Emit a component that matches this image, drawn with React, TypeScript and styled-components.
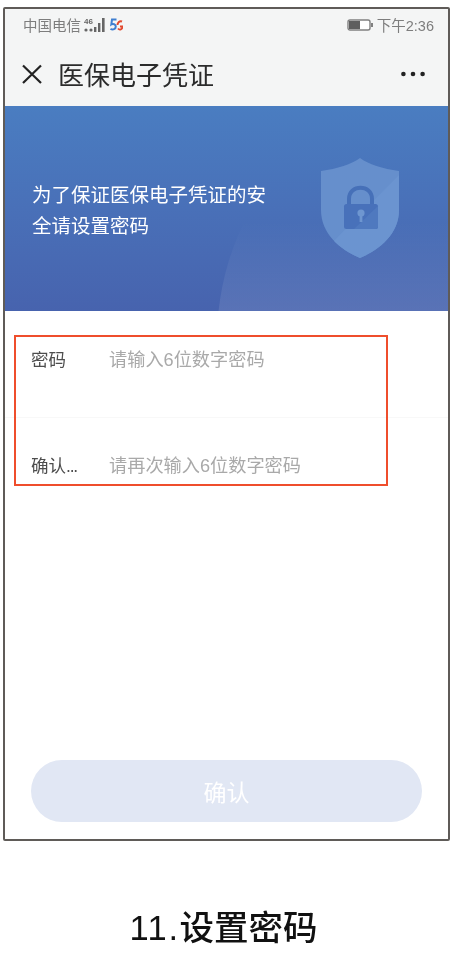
import React from "react";
import styled, { createGlobalStyle } from "styled-components";

const FONT = `"Liberation Sans", "Noto Sans CJK SC", sans-serif`;

const GlobalStyle = createGlobalStyle`
  html, body {
    margin: 0;
    padding: 0;
    background: #fff;
    font-family: ${FONT};
  }
`;

const Page = styled.div`
  width: 451px;
  height: 975px;
  padding: 7px 1px 0 3px;
  box-sizing: border-box;
  overflow: hidden;
  background: #fff;
  filter: blur(0.45px);
`;

const Phone = styled.div`
  height: 834px;
  box-sizing: border-box;
  display: flex;
  flex-direction: column;
  border: 2px solid #5f5b58;
  border-radius: 2px;
  background: #fff;
`;

const Header = styled.div`
  height: 97px;
  flex: none;
  background: #f4f5f5;
`;

const StatusBar = styled.div`
  height: 31px;
  padding: 0 14px 2px 18px;
  display: flex;
  align-items: center;
  justify-content: space-between;
  font-size: 14.5px;
  color: #7d7d7d;
`;

const StatusGroup = styled.div`
  display: flex;
  align-items: center;
  gap: 3px;
`;

const NavBar = styled.div`
  height: 64px;
  padding: 0 23px 0 16px;
  display: flex;
  align-items: center;
  font-size: 26px;
  color: #2b2b2b;
`;

const NavTitle = styled.span`
  margin: 0 0 2px 15px;
  flex: 1;
`;

const Banner = styled.div`
  position: relative;
  height: 205px;
  flex: none;
  padding: 0 0 0 27px;
  display: flex;
  align-items: center;
  justify-content: space-between;
  box-sizing: border-box;
  overflow: hidden;
  background: linear-gradient(180deg, #4a7dc1 0%, #4970b8 50%, #4763ae 100%);
  color: #fff;
`;

const BannerGlow = styled.div`
  position: absolute;
  left: 212px;
  top: -36px;
  width: 540px;
  height: 540px;
  border-radius: 50%;
  background: linear-gradient(
    180deg,
    rgba(255, 255, 255, 0) 28%,
    rgba(255, 255, 255, 0.1) 45%
  );
`;

const BannerText = styled.p`
  width: 240px;
  margin: 5px 0 0;
  font-size: 19.5px;
  line-height: 31px;
  position: relative;
`;

const ShieldWrap = styled.div`
  position: relative;
  margin: 0 49px 2px 0;
  display: flex;
`;

const Form = styled.div`
  position: relative;
`;

const Field = styled.div`
  height: 106px;
  box-sizing: border-box;
  padding: 36px 0 0 26px;
  display: flex;
  font-size: 17.5px;
  line-height: 26px;
  & + & {
    border-top: 1px solid #f8f8f8;
    padding-top: 35px;
  }
`;

const FieldLabel = styled.span`
  width: 78px;
  flex: none;
  color: #4d4d4d;
`;

const Dots = styled.span`
  letter-spacing: -1.2px;
`;

const FieldHint = styled.span`
  font-size: 18.2px;
  color: #a9a9a9;
`;

const Annotation = styled.div`
  position: absolute;
  left: 9px;
  top: 24px;
  width: 374px;
  height: 151px;
  box-sizing: border-box;
  border: 2px solid #ef4e2c;
`;

const Footer = styled.div`
  margin-top: auto;
  padding: 0 26px 17px 26px;
`;

const ConfirmButton = styled.button`
  display: block;
  width: 100%;
  height: 62px;
  border: 0;
  border-radius: 31px;
  background: #e1e7f4;
  color: #fff;
  font-family: inherit;
  font-size: 23px;
`;

const Caption = styled.div`
  margin-top: 64px;
  padding-right: 6px;
  text-align: center;
  font-size: 34.5px;
  line-height: 46px;
  font-weight: 500;
  color: #111;
`;

const CaptionNumber = styled.span`
  letter-spacing: 1.6px;
`;

const CloseIcon = () => (
  <svg width="22" height="22" viewBox="0 0 22 22">
    <path d="M2 2.5 20 20M20 2.5 2 20" stroke="#222" strokeWidth="2.2" fill="none" />
  </svg>
);

const MoreIcon = () => (
  <svg width="24" height="6" viewBox="0 0 24 6">
    <circle cx="2.4" cy="3" r="2.3" fill="#222" />
    <circle cx="12" cy="3" r="2.3" fill="#222" />
    <circle cx="21.6" cy="3" r="2.3" fill="#222" />
  </svg>
);

const SignalIcon = () => (
  <svg width="22" height="16" viewBox="0 0 22 16">
    <text x="0" y="7" fontSize="8" fontWeight="700" fill="#666" fontFamily="Liberation Sans">46</text>
    <circle cx="2" cy="13" r="1.6" fill="#666" />
    <circle cx="7" cy="13" r="1.6" fill="#666" />
    <rect x="10" y="10" width="2.4" height="5" fill="#666" />
    <rect x="14" y="6" width="2.4" height="9" fill="#666" />
    <rect x="18" y="1" width="2.6" height="14" fill="#666" />
  </svg>
);

const FiveGIcon = () => (
  <svg width="14" height="14" viewBox="0 0 14 14">
    <path d="M7.5 1.5H3L2.3 6.5C4 5.5 6.8 6 6.8 8.5S4 12.3 1.5 10.8" stroke="#3f7fd0" strokeWidth="2" fill="none" />
    <path d="M13 3.5C10.5 2.5 8.5 4.5 8.5 7" stroke="#e2492f" strokeWidth="2" fill="none" />
    <path d="M9 10.5C10.5 12.5 13.5 11.5 13.5 8.5H11" stroke="#e2492f" strokeWidth="1.8" fill="none" />
  </svg>
);

const BatteryIcon = () => (
  <svg width="27" height="14" viewBox="0 0 27 14">
    <rect x="1" y="2" width="22" height="10" rx="2" fill="#fff" stroke="#808080" strokeWidth="1.4" />
    <rect x="2" y="3" width="11" height="8" fill="#5e5e5e" />
    <rect x="24" y="5" width="2" height="4" fill="#808080" />
  </svg>
);

const SHIELD_PATH = "M39 0C47 6 62 11 78 13V52C78 75 60 91 39 100C18 91 0 75 0 52V13C16 11 31 6 39 0Z";

const ShieldIcon = () => (
  <svg width="78" height="100" viewBox="0 0 78 100">
    <defs>
      <clipPath id="shield-clip">
        <path d={SHIELD_PATH} />
      </clipPath>
    </defs>
    <path d={SHIELD_PATH} fill="#668fcc" />
    <path d="M78 17 L0 96V100H78Z" fill="#6b94d0" clipPath="url(#shield-clip)" />
    <path d="M28 47V41C28 26 51 26 51 41V47" stroke="#4670b8" strokeWidth="4" fill="none" />
    <rect x="23" y="46" width="34" height="25" rx="2.5" fill="#4871ba" />
    <path d="M57 48V68.5A2.5 2.5 0 0 1 54.5 71H33Z" fill="#4f79bf" />
    <circle cx="40" cy="55" r="3.6" fill="#6e96d0" />
    <rect x="38.6" y="56" width="2.8" height="8" fill="#6e96d0" />
  </svg>
);

export default function App() {
  return (
    <Page>
      <GlobalStyle />
      <Phone>
        <Header>
          <StatusBar>
            <StatusGroup>
              <span>中国电信</span>
              <SignalIcon />
              <FiveGIcon />
            </StatusGroup>
            <StatusGroup>
              <BatteryIcon />
              <span>下午2:36</span>
            </StatusGroup>
          </StatusBar>
          <NavBar>
            <CloseIcon />
            <NavTitle>医保电子凭证</NavTitle>
            <MoreIcon />
          </NavBar>
        </Header>
        <Banner>
          <BannerGlow />
          <BannerText>为了保证医保电子凭证的安全请设置密码</BannerText>
          <ShieldWrap>
            <ShieldIcon />
          </ShieldWrap>
        </Banner>
        <Form>
          <Field>
            <FieldLabel>密码</FieldLabel>
            <FieldHint>请输入6位数字密码</FieldHint>
          </Field>
          <Field>
            <FieldLabel>
              确认<Dots>...</Dots>
            </FieldLabel>
            <FieldHint>请再次输入6位数字密码</FieldHint>
          </Field>
          <Annotation />
        </Form>
        <Footer>
          <ConfirmButton>确认</ConfirmButton>
        </Footer>
      </Phone>
      <Caption>
        <CaptionNumber>11.</CaptionNumber>设置密码
      </Caption>
    </Page>
  );
}
